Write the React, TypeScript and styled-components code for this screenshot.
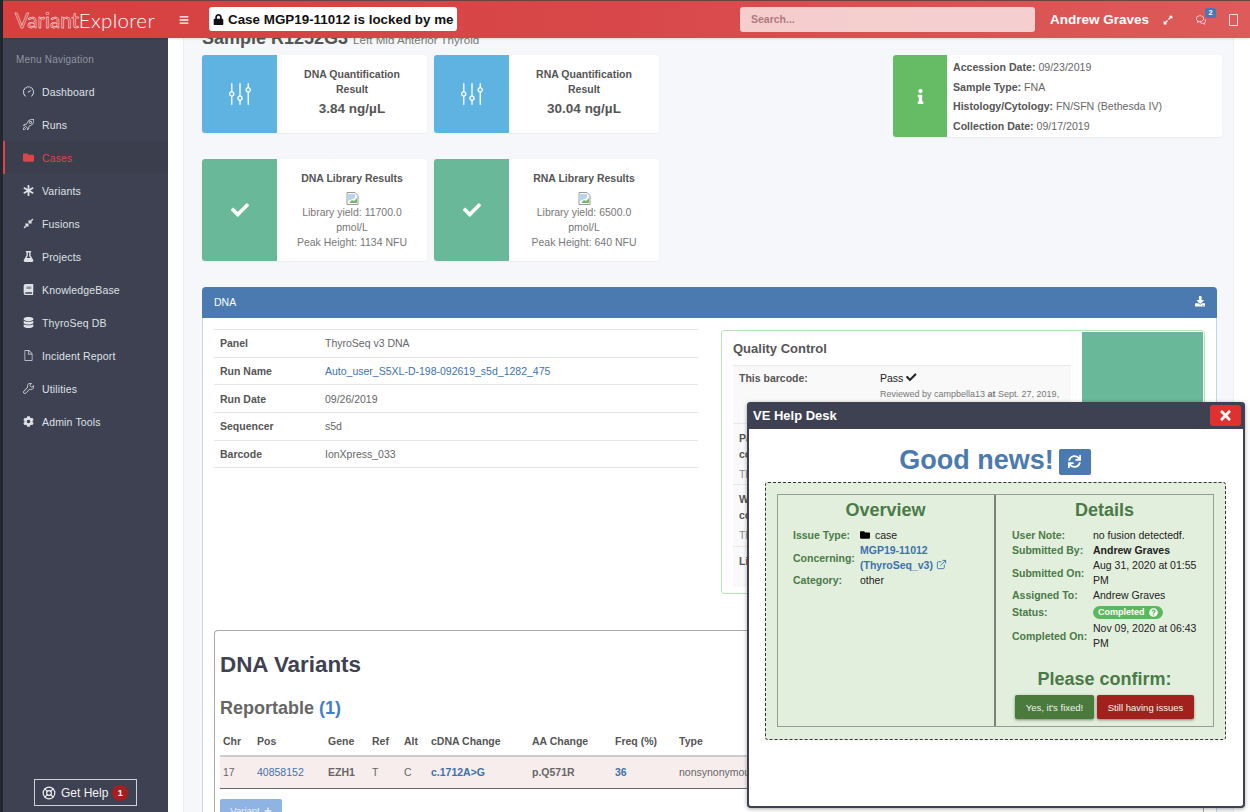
import { createGlobalStyle, styled } from "styled-components";
import { ExternalLink, LifeBuoy } from "lucide-react";
import {
  FaAsterisk,
  FaBars,
  FaBook,
  FaCheck,
  FaCog,
  FaCompressAlt,
  FaDatabase,
  FaDownload,
  FaExpandAlt,
  FaFlask,
  FaFolder,
  FaInfo,
  FaLock,
  FaPlus,
  FaQuestionCircle,
  FaSync,
  FaTimes,
} from "react-icons/fa";
import { SlBubbles, SlDoc, SlEqualizer, SlRocket, SlSpeedometer, SlWrench } from "react-icons/sl";

const GlobalStyle = createGlobalStyle`
  html, body {
    margin: 0;
    padding: 0;
    background: #fff;
  }
  * {
    box-sizing: border-box;
  }
  body {
    font-family: "Liberation Sans", Arial, sans-serif;
    font-size: 10.5px;
    color: #666;
  }
`;

const menu = [
  { label: "Dashboard", icon: <SlSpeedometer /> },
  { label: "Runs", icon: <SlRocket /> },
  { label: "Cases", icon: <FaFolder />, active: true },
  { label: "Variants", icon: <FaAsterisk /> },
  { label: "Fusions", icon: <FaCompressAlt /> },
  { label: "Projects", icon: <FaFlask /> },
  { label: "KnowledgeBase", icon: <FaBook /> },
  { label: "ThyroSeq DB", icon: <FaDatabase /> },
  { label: "Incident Report", icon: <SlDoc /> },
  { label: "Utilities", icon: <SlWrench /> },
  { label: "Admin Tools", icon: <FaCog /> },
];

const BrokenImage = () => (
  <BrokenIcon width="13" height="13" viewBox="0 0 13 13">
    <path d="M1 .5h8l3 3v9H1z" fill="#fff" stroke="#9a9a9a" />
    <path d="M2 2h7v4L2 9z" fill="#b8d4f0" />
    <path d="M3 11l3-3 2 1 3-3v5H3z" fill="#76b56b" />
  </BrokenIcon>
);

export default function App() {
  return (
    <Shell>
      <GlobalStyle />
      <EdgeStripe />
      <Column>
        <Header>
          <Logo>
            <LogoOutline>Variant</LogoOutline>Explorer
          </Logo>
          <MenuToggle>
            <FaBars />
          </MenuToggle>
          <LockBadge>
            <FaLock /> Case MGP19-11012 is locked by me
          </LockBadge>
          <Search>Search...</Search>
          <UserName>Andrew Graves</UserName>
          <HeaderIcon $left={14}>
            <FaExpandAlt />
          </HeaderIcon>
          <HeaderIcon $left={23}>
            <SlBubbles />
            <CountBadge>2</CountBadge>
          </HeaderIcon>
          <PanelToggle viewBox="0 0 9 12" width="9" height="12">
            <rect x=".5" y=".5" width="8" height="11" fill="none" stroke="#fff" strokeOpacity=".85" />
          </PanelToggle>
        </Header>
        <Body>
          <Sidebar>
            <MenuTitle>Menu Navigation</MenuTitle>
            {menu.map((item) => (
              <MenuItem key={item.label} $active={item.active}>
                <MenuIcon>{item.icon}</MenuIcon>
                {item.label}
              </MenuItem>
            ))}
            <HelpButton>
              <LifeBuoy size={14} />
              Get Help
              <HelpCount>1</HelpCount>
            </HelpButton>
          </Sidebar>
          <Main>
            <Page>
              <SampleTitle>
                Sample R1252G3 <small>Left Mid Anterior Thyroid</small>
              </SampleTitle>
              <TopRow>
                <CardGrid>
                  <Card>
                    <CardIcon $color="#5fb3e0" $size={22}>
                      <SlEqualizer />
                    </CardIcon>
                    <CardText>
                      <CardTitle>DNA Quantification Result</CardTitle>
                      <CardValue>3.84 ng/µL</CardValue>
                    </CardText>
                  </Card>
                  <Card>
                    <CardIcon $color="#5fb3e0" $size={22}>
                      <SlEqualizer />
                    </CardIcon>
                    <CardText>
                      <CardTitle>RNA Quantification Result</CardTitle>
                      <CardValue>30.04 ng/µL</CardValue>
                    </CardText>
                  </Card>
                  <Card>
                    <CardIcon $color="#69b89a" $size={18}>
                      <FaCheck />
                    </CardIcon>
                    <CardText>
                      <CardTitle>DNA Library Results</CardTitle>
                      <BrokenImage />
                      <div>Library yield: 11700.0 pmol/L</div>
                      <div>Peak Height: 1134 NFU</div>
                    </CardText>
                  </Card>
                  <Card>
                    <CardIcon $color="#69b89a" $size={18}>
                      <FaCheck />
                    </CardIcon>
                    <CardText>
                      <CardTitle>RNA Library Results</CardTitle>
                      <BrokenImage />
                      <div>Library yield: 6500.0 pmol/L</div>
                      <div>Peak Height: 640 NFU</div>
                    </CardText>
                  </Card>
                </CardGrid>
                <InfoCard>
                  <InfoIcon>
                    <FaInfo />
                  </InfoIcon>
                  <InfoList>
                    <div>
                      <b>Accession Date:</b> 09/23/2019
                    </div>
                    <div>
                      <b>Sample Type:</b> FNA
                    </div>
                    <div>
                      <b>Histology/Cytology:</b> FN/SFN (Bethesda IV)
                    </div>
                    <div>
                      <b>Collection Date:</b> 09/17/2019
                    </div>
                  </InfoList>
                </InfoCard>
              </TopRow>
              <Panel>
                <PanelHead>
                  DNA
                  <FaDownload />
                </PanelHead>
                <PanelBody>
                  <PanelColumns>
                    <RunTable>
                      <tbody>
                        <tr>
                          <th>Panel</th>
                          <td>ThyroSeq v3 DNA</td>
                        </tr>
                        <tr>
                          <th>Run Name</th>
                          <td>
                            <TextLink>Auto_user_S5XL-D-198-092619_s5d_1282_475</TextLink>
                          </td>
                        </tr>
                        <tr>
                          <th>Run Date</th>
                          <td>09/26/2019</td>
                        </tr>
                        <tr>
                          <th>Sequencer</th>
                          <td>s5d</td>
                        </tr>
                        <tr>
                          <th>Barcode</th>
                          <td>IonXpress_033</td>
                        </tr>
                      </tbody>
                    </RunTable>
                    <QcBox>
                      <QcMain>
                        <QcTitle>Quality Control</QcTitle>
                        <QcRow $height={58} $top={4}>
                          <QcLabel>This barcode:</QcLabel>
                          <div>
                            <QcPass>
                              Pass <FaCheck />
                            </QcPass>
                            <QcNote>
                              Reviewed by campbella13 <b>at</b> Sept. 27, 2019,
                            </QcNote>
                          </div>
                        </QcRow>
                        <QcRow $height={61} $top={6}>
                          <div>
                            <QcLabel>
                              Panel
                              <br />
                              coverage:
                            </QcLabel>
                            <QcHint>This run</QcHint>
                          </div>
                        </QcRow>
                        <QcRow $height={62} $top={6}>
                          <div>
                            <QcLabel>
                              Within
                              <br />
                              coverage:
                            </QcLabel>
                            <QcHint>This run</QcHint>
                          </div>
                        </QcRow>
                        <QcRow $height={40} $top={6}>
                          <QcLabel>Library:</QcLabel>
                        </QcRow>
                      </QcMain>
                      <QcStatus />
                    </QcBox>
                  </PanelColumns>
                  <VariantBox>
                    <VariantTitle>DNA Variants</VariantTitle>
                    <SectionTitle>
                      Reportable <span>(1)</span>
                    </SectionTitle>
                    <VariantTable>
                      <colgroup>
                        <col width="34" />
                        <col width="71" />
                        <col width="44" />
                        <col width="32" />
                        <col width="27" />
                        <col width="101" />
                        <col width="83" />
                        <col width="64" />
                        <col />
                      </colgroup>
                      <thead>
                        <tr>
                          <th>Chr</th>
                          <th>Pos</th>
                          <th>Gene</th>
                          <th>Ref</th>
                          <th>Alt</th>
                          <th>cDNA Change</th>
                          <th>AA Change</th>
                          <th>Freq (%)</th>
                          <th>Type</th>
                        </tr>
                      </thead>
                      <tbody>
                        <tr>
                          <td>17</td>
                          <td>
                            <TextLink>40858152</TextLink>
                          </td>
                          <td>
                            <b>EZH1</b>
                          </td>
                          <td>T</td>
                          <td>C</td>
                          <td>
                            <TextLink>
                              <b>c.1712A&gt;G</b>
                            </TextLink>
                          </td>
                          <td>
                            <b>p.Q571R</b>
                          </td>
                          <td>
                            <TextLink>
                              <b>36</b>
                            </TextLink>
                          </td>
                          <td>nonsynonymous SNV</td>
                        </tr>
                      </tbody>
                    </VariantTable>
                    <AddButton>
                      Variant <FaPlus />
                    </AddButton>
                  </VariantBox>
                </PanelBody>
              </Panel>
            </Page>
          </Main>
        </Body>
      </Column>
      <Modal>
        <ModalHead>
          VE Help Desk
          <CloseButton>
            <FaTimes />
          </CloseButton>
        </ModalHead>
        <NewsRow>
          Good news!
          <RefreshButton>
            <FaSync />
          </RefreshButton>
        </NewsRow>
        <ResultBox>
          <ResultGrid>
            <ResultCell>
              <ResultTitle>Overview</ResultTitle>
              <Facts $labelWidth={67}>
                <FactLabel>Issue Type:</FactLabel>
                <FactValue>
                  <CaseIcon>
                    <FaFolder />
                  </CaseIcon>
                  case
                </FactValue>
                <FactLabel>Concerning:</FactLabel>
                <FactValue>
                  <TextLink>
                    <b>MGP19-11012</b>
                    <br />
                    <b>(ThyroSeq_v3)</b> <ExternalLink size={11} />
                  </TextLink>
                </FactValue>
                <FactLabel>Category:</FactLabel>
                <FactValue>other</FactValue>
              </Facts>
            </ResultCell>
            <ResultCell>
              <ResultTitle>Details</ResultTitle>
              <Facts $labelWidth={81}>
                <FactLabel>User Note:</FactLabel>
                <FactValue>no fusion detectedf.</FactValue>
                <FactLabel>Submitted By:</FactLabel>
                <FactValue>
                  <b>Andrew Graves</b>
                </FactValue>
                <FactLabel>Submitted On:</FactLabel>
                <FactValue>Aug 31, 2020 at 01:55 PM</FactValue>
                <FactLabel>Assigned To:</FactLabel>
                <FactValue>Andrew Graves</FactValue>
                <FactLabel>Status:</FactLabel>
                <FactValue>
                  <StatusPill>
                    Completed <FaQuestionCircle />
                  </StatusPill>
                </FactValue>
                <FactLabel>Completed On:</FactLabel>
                <FactValue>Nov 09, 2020 at 06:43 PM</FactValue>
              </Facts>
              <ConfirmTitle>Please confirm:</ConfirmTitle>
              <ConfirmRow>
                <ConfirmButton $color="#4a7a3c" $width={79}>
                  Yes, it's fixed!
                </ConfirmButton>
                <ConfirmButton $color="#a2211c" $width={97}>
                  Still having issues
                </ConfirmButton>
              </ConfirmRow>
            </ResultCell>
          </ResultGrid>
        </ResultBox>
      </Modal>
    </Shell>
  );
}

const Shell = styled.div`
  position: relative;
  display: flex;
  width: 1250px;
  height: 812px;
  overflow: hidden;
`;

const EdgeStripe = styled.div`
  flex: 0 0 3px;
  background: #23262e;
`;

const Column = styled.div`
  flex: 1;
  min-width: 0;
  display: flex;
  flex-direction: column;
`;

const Header = styled.header`
  flex: 0 0 38px;
  display: flex;
  align-items: center;
  padding-right: 12px;
  border-top: 1px solid #6b4347;
  background: linear-gradient(90deg, #d63f3e 0%, #d8484a 50%, #dd5b5a 100%);
  box-shadow: 0 1px 2px rgba(0, 0, 0, 0.12);
  z-index: 2;
  color: #fff;
`;

const Logo = styled.div`
  width: 175px;
  padding-left: 12px;
  font-family: Lato, "Liberation Sans", sans-serif;
  font-size: 20.5px;
  font-weight: 300;
  letter-spacing: 0.35px;
  white-space: nowrap;
`;

const LogoOutline = styled.span`
  color: #d63f3e;
  font-weight: 400;
  letter-spacing: 0;
  -webkit-text-stroke: 0.45px #fff;
`;

const MenuToggle = styled.div`
  width: 31px;
  padding-left: 1px;
  display: flex;
  font-size: 10px;
`;

const LockBadge = styled.div`
  height: 24px;
  width: 248px;
  display: flex;
  align-items: center;
  gap: 4px;
  padding-left: 5px;
  border-radius: 3px;
  background: #fff;
  color: #111;
  font-size: 13.4px;
  font-weight: 700;
  white-space: nowrap;
  margin-top: -1px;
  svg {
    font-size: 11px;
    margin-left: -1px;
  }
`;

const Search = styled.div`
  width: 295px;
  height: 25px;
  margin-left: auto;
  padding-left: 11px;
  display: flex;
  align-items: center;
  border-radius: 3px;
  background: rgba(255, 255, 255, 0.72);
  color: #b07a80;
  font-size: 10.5px;
  font-weight: 700;
  margin-top: -1px;
`;

const UserName = styled.div`
  margin-left: 15px;
  font-size: 13.5px;
  font-weight: 700;
`;

const HeaderIcon = styled.div<{ $left: number }>`
  position: relative;
  display: flex;
  margin-left: ${(p) => p.$left}px;
  font-size: 10px;
  svg {
    display: block;
  }
`;

const CountBadge = styled.span`
  position: absolute;
  top: -7px;
  left: 9px;
  width: 11px;
  height: 10px;
  border-radius: 2px;
  background: #4a78b4;
  color: #fff;
  font-size: 7.5px;
  font-weight: 700;
  line-height: 10px;
  text-align: center;
`;

const PanelToggle = styled.svg`
  margin-left: 23px;
`;

const Body = styled.div`
  flex: 1;
  min-height: 0;
  display: flex;
`;

const Sidebar = styled.nav`
  flex: 0 0 165px;
  display: flex;
  flex-direction: column;
  padding-bottom: 6px;
  background: #3e4151;
  color: #dfe1e6;
  font-size: 10.5px;
`;

const MenuTitle = styled.div`
  height: 37px;
  padding: 16px 0 0 13px;
  color: #90939f;
  font-size: 10px;
  letter-spacing: 0.2px;
`;

const MenuItem = styled.div<{ $active?: boolean }>`
  height: 33px;
  display: flex;
  align-items: center;
  padding-left: 20px;
  letter-spacing: 0.15px;
  color: ${(p) => (p.$active ? "#d9474a" : "#dfe1e6")};
  background: ${(p) => (p.$active ? "#3b3e4d" : "transparent")};
  box-shadow: ${(p) => (p.$active ? "inset 2px 0 0 #d9474a" : "none")};
`;

const MenuIcon = styled.span`
  width: 19px;
  display: flex;
  font-size: 11px;
`;

const HelpButton = styled.div`
  width: 103px;
  height: 27px;
  margin: auto auto 0;
  display: flex;
  align-items: center;
  padding-left: 7px;
  gap: 5px;
  border: 1px solid #cfd1d8;
  color: #f2f2f4;
  font-size: 12px;
`;

const HelpCount = styled.span`
  width: 16px;
  height: 16px;
  margin-left: -1px;
  border-radius: 50%;
  background: #a3201f;
  color: #fff;
  font-size: 9px;
  font-weight: 700;
  line-height: 16px;
  text-align: center;
`;

const Main = styled.main`
  flex: 1;
  min-width: 0;
  overflow: hidden;
  padding: 0 16px 0 15px;
  background: #fff;
`;

const Page = styled.div`
  min-height: 100%;
  padding-left: 18px;
  border-left: 1px solid #eceef3;
  border-right: 1px solid #eceef3;
  background: #f6f7fa;
`;

const SampleTitle = styled.h2`
  margin: -10px 0 7px;
  height: 20px;
  color: #555;
  font-size: 18px;
  font-weight: 700;
  line-height: 20px;
  white-space: nowrap;
  small {
    color: #777;
    font-size: 11.6px;
    font-weight: 400;
  }
`;

const TopRow = styled.div`
  display: flex;
  justify-content: space-between;
  align-items: flex-start;
  padding-right: 11px;
`;

const CardGrid = styled.div`
  display: grid;
  grid-template-columns: 225px 225px;
  grid-template-rows: 78px 102px;
  column-gap: 7px;
  row-gap: 26px;
`;

const Card = styled.div`
  display: flex;
  overflow: hidden;
  border-radius: 3px;
  background: #fff;
  box-shadow: 0 1px 2px rgba(0, 0, 0, 0.05);
`;

const CardIcon = styled.div<{ $color: string; $size: number }>`
  flex: 0 0 75px;
  display: flex;
  align-items: center;
  justify-content: center;
  background: ${(p) => p.$color};
  color: #fff;
  font-size: ${(p) => p.$size}px;
`;

const CardText = styled.div`
  flex: 1;
  padding: 12px 15px 0;
  color: #777;
  font-size: 10.5px;
  line-height: 15px;
  text-align: center;
`;

const CardTitle = styled.div`
  color: #555;
  font-weight: 700;
`;

const CardValue = styled.div`
  margin-top: 4px;
  color: #555;
  font-size: 13.5px;
  font-weight: 700;
`;

const BrokenIcon = styled.svg`
  display: block;
  margin: 6px auto 0;
`;

const InfoCard = styled.div`
  width: 329px;
  height: 82px;
  display: flex;
  overflow: hidden;
  border-radius: 3px;
  background: #fff;
  box-shadow: 0 1px 2px rgba(0, 0, 0, 0.05);
`;

const InfoIcon = styled.div`
  flex: 0 0 54px;
  display: flex;
  align-items: center;
  justify-content: center;
  background: #66bc64;
  color: #fff;
  font-size: 15px;
`;

const InfoList = styled.div`
  padding: 3px 0 0 6px;
  color: #666;
  font-size: 10.6px;
  line-height: 19.6px;
  b {
    color: #555;
  }
`;

const Panel = styled.section`
  margin: 26px 16px 0 0;
  border: 1px solid #c5d6ec;
  border-radius: 4px 4px 0 0;
  background: #fff;
`;

const PanelHead = styled.div`
  height: 31px;
  margin: -1px -1px 0;
  padding: 0 12px 2px;
  display: flex;
  align-items: center;
  justify-content: space-between;
  border-radius: 4px 4px 0 0;
  background: #4a7ab0;
  color: #fff;
  font-size: 10.5px;
`;

const PanelBody = styled.div`
  padding: 11px 12px 0 11px;
`;

const PanelColumns = styled.div`
  display: grid;
  grid-template-columns: 484px 484px;
  column-gap: 23px;
  align-items: start;
`;

const RunTable = styled.table`
  width: 100%;
  border-collapse: collapse;
  border-top: 1px solid #e4e4e4;
  font-size: 10.5px;
  th,
  td {
    height: 27.7px;
    padding: 0 6px;
    border-bottom: 1px solid #e4e4e4;
    text-align: left;
  }
  th {
    width: 105px;
    color: #555;
    font-weight: 700;
  }
  td {
    color: #666;
  }
`;

const TextLink = styled.a`
  color: #3e72ab;
  svg {
    vertical-align: -1px;
  }
`;

const QcBox = styled.div`
  height: 264px;
  margin-top: 1px;
  display: flex;
  padding: 1px 1px 1px 11px;
  border: 1px solid #b8e6b4;
  border-radius: 3px;
  background: #fff;
`;

const QcMain = styled.div`
  flex: 0 0 338px;
`;

const QcTitle = styled.h3`
  height: 34px;
  margin: 0;
  padding-top: 9px;
  border-bottom: 1px solid #e8e8e8;
  color: #555;
  font-size: 13px;
  font-weight: 700;
`;

const QcRow = styled.div<{ $height: number; $top: number }>`
  display: grid;
  grid-template-columns: 141px 1fr;
  height: ${(p) => p.$height}px;
  padding: ${(p) => p.$top}px 6px 0;
  border-bottom: 1px solid #e8e8e8;
  background: #f9f9f9;
  font-size: 10.5px;
  line-height: 16px;
  &:last-child {
    border-bottom: 0;
  }
`;

const QcLabel = styled.div`
  color: #555;
  font-weight: 700;
`;

const QcPass = styled.div`
  color: #222;
`;

const QcNote = styled.div`
  color: #777;
  font-size: 9px;
  white-space: nowrap;
`;

const QcHint = styled.div`
  margin-top: 4px;
  color: #888;
`;

const QcStatus = styled.div`
  flex: 1;
  margin-left: 11px;
  background: #69b89a;
`;

const VariantBox = styled.div`
  margin-top: 36px;
  height: 240px;
  padding: 0 5px;
  border: 1px solid #aaa;
  border-bottom: 0;
  border-radius: 4px 4px 0 0;
  background: #fff;
`;

const VariantTitle = styled.h2`
  margin: 20px 0 0;
  color: #3e4151;
  font-size: 22.4px;
  font-weight: 700;
  line-height: 27px;
`;

const SectionTitle = styled.h3`
  margin: 18px 0 0;
  color: #666;
  font-size: 18px;
  font-weight: 700;
  line-height: 24px;
  span {
    color: #3f7ed0;
  }
`;

const VariantTable = styled.table`
  width: 100%;
  margin-top: 8px;
  border-collapse: collapse;
  table-layout: fixed;
  font-size: 10.5px;
  th {
    height: 28px;
    padding: 0 3px 2px;
    color: #555;
    font-weight: 700;
    text-align: left;
    border-bottom: 2px solid #ccc;
  }
  td {
    height: 32px;
    padding: 0 3px;
    background: #f7eded;
    border-bottom: 1px solid #666;
    color: #666;
    white-space: nowrap;
    overflow: hidden;
  }
  b {
    color: inherit;
  }
`;

const AddButton = styled.div`
  width: 62px;
  height: 24px;
  margin-top: 10px;
  display: flex;
  align-items: center;
  justify-content: center;
  gap: 4px;
  border-radius: 2px;
  background: #8fb3e3;
  color: #e8f0fa;
  font-size: 9.5px;
  svg {
    font-size: 8px;
  }
`;

const Modal = styled.aside`
  position: absolute;
  left: 747px;
  top: 402px;
  width: 498px;
  height: 406px;
  border: 2px solid #3e4151;
  border-top: 0;
  border-radius: 4px;
  background: #fff;
  box-shadow: 0 1px 4px rgba(0, 0, 0, 0.35);
  z-index: 3;
`;

const ModalHead = styled.div`
  height: 27px;
  margin: 0 -2px;
  padding: 0 4px 0 6px;
  display: flex;
  align-items: center;
  justify-content: space-between;
  border-radius: 4px 4px 0 0;
  background: #3e4151;
  color: #fff;
  font-size: 13px;
  font-weight: 700;
`;

const CloseButton = styled.div`
  width: 31px;
  height: 21px;
  display: flex;
  align-items: center;
  justify-content: center;
  border-radius: 3px;
  background: #e03131;
  font-size: 15px;
`;

const NewsRow = styled.div`
  height: 53px;
  padding: 9px 2px 0 0;
  display: flex;
  align-items: center;
  justify-content: center;
  gap: 5px;
  color: #4a7ab0;
  font-size: 27px;
  font-weight: 700;
`;

const RefreshButton = styled.div`
  width: 32px;
  height: 26px;
  margin-top: 3px;
  display: flex;
  align-items: center;
  justify-content: center;
  border-radius: 2px;
  background: #4a7ab0;
  color: #fff;
  font-size: 13px;
`;

const ResultBox = styled.div`
  height: 258px;
  margin: 0 17px 0 16px;
  padding: 11px;
  border: 1px dashed #333;
  border-radius: 3px;
  background: #e2efdc;
`;

const ResultGrid = styled.div`
  height: 233px;
  display: grid;
  grid-template-columns: 216px 1fr;
  border: 1px solid #979c98;
`;

const ResultCell = styled.div`
  padding: 3px 16px 0 15px;
  &:last-child {
    border-left: 2px solid #7b807c;
    padding-left: 16px;
  }
`;

const ResultTitle = styled.h3`
  margin: 0 0 6px;
  color: #4a7a48;
  font-size: 18px;
  font-weight: 700;
  line-height: 24px;
  text-align: center;
`;

const Facts = styled.div<{ $labelWidth: number }>`
  display: grid;
  grid-template-columns: ${(p) => p.$labelWidth}px 1fr;
  align-items: center;
  margin-right: -8px;
  font-size: 10.5px;
  line-height: 15px;
`;

const FactLabel = styled.div`
  color: #4a7a48;
  font-weight: 700;
  white-space: nowrap;
`;

const FactValue = styled.div`
  color: #222;
`;

const CaseIcon = styled.span`
  margin-right: 5px;
  color: #000;
  font-size: 10px;
  svg {
    vertical-align: -1px;
  }
`;

const StatusPill = styled.span`
  display: inline-flex;
  align-items: center;
  gap: 4px;
  height: 13px;
  margin: 3px 0 2px;
  padding: 0 5px;
  border-radius: 7px;
  background: #5cb85c;
  color: #fff;
  font-size: 9px;
  font-weight: 700;
  vertical-align: top;
`;

const ConfirmTitle = styled.div`
  margin-top: 17px;
  color: #4a7a48;
  font-size: 18px;
  font-weight: 700;
  line-height: 22px;
  text-align: center;
`;

const ConfirmRow = styled.div`
  display: flex;
  justify-content: center;
  gap: 3px;
  margin-top: 5px;
`;

const ConfirmButton = styled.div<{ $color: string; $width: number }>`
  width: ${(p) => p.$width}px;
  height: 24px;
  display: flex;
  align-items: center;
  justify-content: center;
  border-radius: 2px;
  background: ${(p) => p.$color};
  box-shadow: 0 1px 3px rgba(0, 0, 0, 0.45);
  color: #f2f2f2;
  font-size: 9.5px;
  white-space: nowrap;
`;
